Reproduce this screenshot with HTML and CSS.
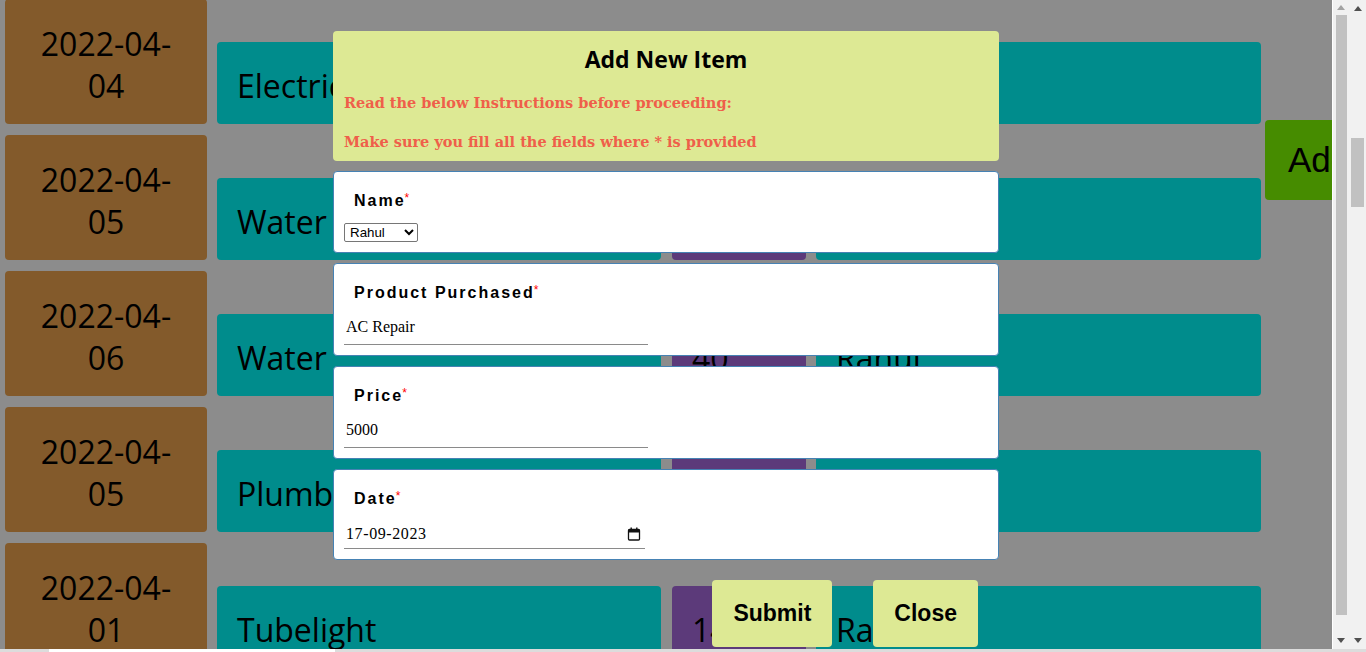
FILE: index.html
```html
<!DOCTYPE html>
<html lang="en">
<head>
<meta charset="utf-8">
<title>Expenses</title>
<link rel="stylesheet" href="styles.css">
</head>
<body>
<div class="screen">
  <div class="top">
    <div class="app">
      <div class="content">
        <div class="list">
          <div class="row">
            <div class="date">2022-04-04</div>
            <div class="cell product">Electricity</div>
            <div class="cell price">1500</div>
            <div class="cell person">Rahul</div>
          </div>
          <div class="row">
            <div class="date">2022-04-05</div>
            <div class="cell product">Water</div>
            <div class="cell price">200</div>
            <div class="cell person">Rahul</div>
          </div>
          <div class="row">
            <div class="date">2022-04-06</div>
            <div class="cell product">Water</div>
            <div class="cell price">40</div>
            <div class="cell person">Rahul</div>
          </div>
          <div class="row">
            <div class="date">2022-04-05</div>
            <div class="cell product">Plumbing</div>
            <div class="cell price">300</div>
            <div class="cell person">Rahul</div>
          </div>
          <div class="row">
            <div class="date">2022-04-01</div>
            <div class="cell product">Tubelight</div>
            <div class="cell price">140</div>
            <div class="cell person">Rahul</div>
          </div>
        </div>
        <button class="add-btn" type="button">Add Item</button>
      </div>

      <div class="modal-layer">
        <div class="modal">
          <div class="modal-head">
            <h2 class="modal-title">Add New Item</h2>
            <h4 class="note">Read the below Instructions before proceeding:</h4>
            <h4 class="note">Make sure you fill all the fields where * is provided</h4>
          </div>
          <form class="form">
            <div class="field">
              <label class="label">Name<span class="req">*</span></label>
              <select class="select">
                <option>Rahul</option>
                <option>Ramesh</option>
              </select>
            </div>
            <div class="field">
              <label class="label">Product Purchased<span class="req">*</span></label>
              <input class="text-input" type="text" value="AC Repair">
            </div>
            <div class="field">
              <label class="label">Price<span class="req">*</span></label>
              <input class="text-input" type="text" value="5000">
            </div>
            <div class="field">
              <label class="label">Date<span class="req">*</span></label>
              <div class="date-input">
                <input class="date-text" type="text" value="17-09-2023">
                <svg class="cal" width="14" height="14" viewBox="0 0 14 14" aria-hidden="true">
                  <rect x="1.5" y="2.5" width="11" height="10.5" rx="1" fill="none" stroke="#111" stroke-width="1.3"/>
                  <rect x="1.5" y="2.5" width="11" height="3" fill="#111"/>
                  <rect x="3.5" y="0.5" width="1.4" height="3" fill="#111"/>
                  <rect x="9.1" y="0.5" width="1.4" height="3" fill="#111"/>
                </svg>
              </div>
            </div>
          </form>
          <div class="actions">
            <button class="action-btn" type="button">Submit</button>
            <button class="action-btn" type="button">Close</button>
          </div>
        </div>
      </div>
    </div>

    <div class="vscroll inner-sb">
      <div class="sb-btn sb-btn-first">
        <svg width="8" height="5" viewBox="0 0 8 5"><polygon points="0,5 8,5 4,0" fill="#a3a3a3"/></svg>
      </div>
      <div class="sb-track">
        <div class="sb-thumb inner-thumb"></div>
      </div>
      <div class="sb-btn">
        <svg width="8" height="5" viewBox="0 0 8 5"><polygon points="0,0 8,0 4,5" fill="#505050"/></svg>
      </div>
    </div>
    <div class="vscroll page-sb">
      <div class="sb-btn">
        <svg width="8" height="5" viewBox="0 0 8 5"><polygon points="0,5 8,5 4,0" fill="#505050"/></svg>
      </div>
      <div class="sb-track page-track">
        <div class="sb-thumb page-thumb"></div>
      </div>
      <div class="sb-btn">
        <svg width="8" height="5" viewBox="0 0 8 5"><polygon points="0,0 8,0 4,5" fill="#505050"/></svg>
      </div>
    </div>
  </div>
  <div class="hstrip">
    <div class="hs-a"></div>
    <div class="hs-thumb"></div>
    <div class="hs-b"></div>
  </div>
</div>
</body>
</html>
```

FILE: styles.css
```css
* { box-sizing: border-box; }

html, body {
  margin: 0;
  padding: 0;
  width: 1366px;
  height: 652px;
  overflow: hidden;
}

body {
  font-family: "Open Sans", "Noto Sans", sans-serif;
  background: #8c8c8c;
}

.screen {
  display: flex;
  flex-direction: column;
  width: 1366px;
  height: 652px;
}

.top {
  display: flex;
  height: 649px;
}

.app {
  position: relative;
  width: 1332px;
  height: 649px;
  overflow: hidden;
  background: #8c8c8c;
}

.content {
  display: flex;
  align-items: flex-start;
  margin-top: -1px;
  padding-left: 5px;
  width: 1500px;
}

.list {
  display: flex;
  flex-direction: column;
  gap: 11px;
}

.row {
  display: flex;
  align-items: flex-end;
}

.date {
  width: 202px;
  height: 125px;
  padding: 24px 20px 0;
  background: #835a2b;
  border-radius: 4px;
  font-size: 32px;
  line-height: 42px;
  text-align: center;
  color: #000;
}

.cell {
  height: 82px;
  padding: 5px 20px 0;
  display: flex;
  align-items: center;
  border-radius: 4px;
  font-size: 32px;
  color: #000;
  white-space: nowrap;
  overflow: hidden;
}

.product {
  width: 444px;
  margin-left: 10px;
  background: #008c8c;
}

.price {
  width: 134px;
  margin-left: 11px;
  background: #5c3a7a;
}

.person {
  width: 445px;
  margin-left: 10px;
  background: #008c8c;
}

.add-btn {
  margin: 121px 0 0 4px;
  height: 80px;
  padding: 0 23px;
  border: none;
  border-radius: 4px;
  background: #468c00;
  font-family: "Liberation Sans", Arial, sans-serif;
  font-size: 35px;
  color: #000;
  white-space: nowrap;
}

/* modal */
.modal-layer {
  position: absolute;
  inset: 0;
  display: flex;
  justify-content: center;
  align-items: flex-start;
  padding-top: 31px;
}

.modal {
  width: 666px;
  display: flex;
  flex-direction: column;
}

.modal-head {
  background: #dde994;
  border-radius: 4px;
  padding: 13px 11px 10px;
}

.modal-title {
  margin: 0 0 20px;
  font-family: "Open Sans", sans-serif;
  font-size: 23px;
  line-height: 30px;
  font-weight: 700;
  text-align: center;
  color: #000;
}

.note {
  margin: 0;
  font-family: "DejaVu Serif", "Liberation Serif", serif;
  font-size: 14.5px;
  line-height: 18px;
  font-weight: 700;
  color: #ef5f4a;
}

.note + .note {
  margin-top: 21px;
}

.form {
  display: flex;
  flex-direction: column;
  gap: 10px;
  margin: 10px 0 0;
}

.field {
  background: #fff;
  border: 1px solid #4682b4;
  border-radius: 4px;
  padding: 10px;
  display: flex;
  flex-direction: column;
  align-items: flex-start;
}

.label {
  display: block;
  height: 18px;
  margin: 10px 0 11px 10px;
  font-family: "Liberation Sans", Arial, sans-serif;
  font-size: 16px;
  line-height: 18px;
  font-weight: 700;
  letter-spacing: 2px;
  color: #000;
}

.req {
  position: relative;
  top: -4px;
  color: #f00;
  font-size: 12px;
  font-weight: 400;
  letter-spacing: 0;
  margin-left: -1px;
}

.select {
  margin-top: 2px;
  width: 74px;
  height: 19px;
  font-family: "Liberation Sans", Arial, sans-serif;
  font-size: 13.33px;
  border: 1px solid #767676;
  border-radius: 2px;
  background: #fff;
  color: #000;
  padding: 0 0 0 1px;
}

.text-input {
  width: 304px;
  height: 32px;
  padding: 5px 2px 8px;
  border: none;
  border-bottom: 1px solid #8a8a8a;
  background: transparent;
  font-family: "Liberation Serif", serif;
  font-size: 16px;
  line-height: 18px;
  color: #000;
  outline: none;
}

.date-input {
  width: 301px;
  height: 30px;
  display: flex;
  align-items: flex-start;
  justify-content: space-between;
  border-bottom: 1px solid #8a8a8a;
  padding: 6px 4px 0 2px;
}

.date-text {
  width: 250px;
  height: 18px;
  padding: 0;
  border: none;
  background: transparent;
  font-family: "Liberation Serif", serif;
  font-size: 16px;
  line-height: 18px;
  letter-spacing: 0.6px;
  color: #000;
  outline: none;
}

.cal {
  margin-top: 2px;
}

.actions {
  display: flex;
  justify-content: flex-end;
  gap: 41px;
  margin-top: 20px;
  padding-right: 21px;
}

.action-btn {
  height: 67px;
  padding: 0 21px;
  border: none;
  border-radius: 4px;
  background: #dde994;
  font-family: "Liberation Sans", Arial, sans-serif;
  font-size: 23px;
  font-weight: 700;
  color: #000;
}

/* scrollbars */
.vscroll {
  width: 17px;
  height: 649px;
  background: #f1f1f1;
  display: flex;
  flex-direction: column;
}

.sb-btn {
  height: 17px;
  display: flex;
  align-items: center;
  justify-content: center;
  flex: none;
}

.sb-btn-first {
  height: 15px;
}

.sb-track {
  flex: 1;
  display: flex;
  flex-direction: column;
  padding: 0 2px;
}

.sb-thumb {
  background: #c1c1c1;
}

.inner-sb {
  border-left: 1px solid #fff;
}

.inner-thumb {
  height: 600px;
  margin-left: 1px;
}

.page-track {
  padding-top: 121px;
}

.page-thumb {
  height: 69px;
}

.hstrip {
  display: flex;
  height: 3px;
  background: #dcdcdc;
}

.hs-a {
  width: 49px;
}

.hs-thumb {
  width: 286px;
  background: #fff;
}

.hs-b {
  flex: 1;
}
```
